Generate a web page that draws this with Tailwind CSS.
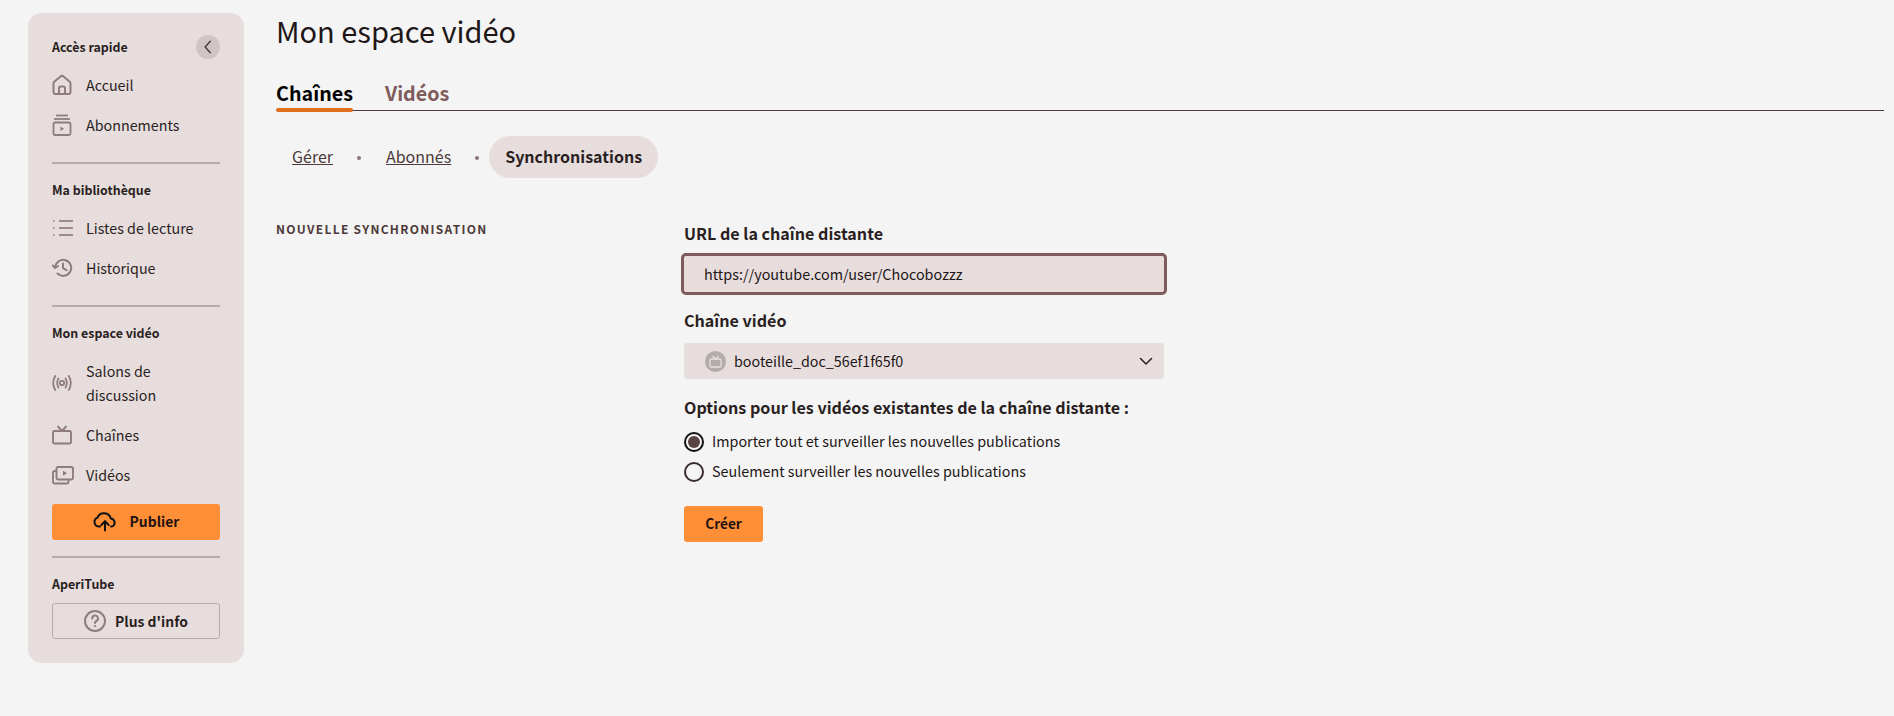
<!DOCTYPE html>
<html lang="fr">
<head>
    <meta charset="UTF-8">
    <meta name="viewport" content="width=device-width, initial-scale=1.0">
    <title>Mon espace vidéo</title>
    <script src="https://cdn.jsdelivr.net/npm/@tailwindcss/browser@4"></script>
</head>
<body class="bg-[#f4f4f4] text-[#2a1f1f] font-['Noto_Sans_CJK_SC','Noto_Sans',sans-serif] h-[716px] overflow-hidden">
    <div class="flex items-start">
        <!-- Menu latéral -->
        <aside class="ml-[28px] mt-[13px] w-[216px] h-[650px] shrink-0 rounded-[14px] bg-[#e7dddd] px-[24px] pt-[21px] text-[#2a1f1f]">
            <div class="flex items-center justify-between h-[26px]">
                <h3 class="text-[12.4px] font-bold leading-[26px]">Accès rapide</h3>
                <button class="w-[24px] h-[24px] rounded-full bg-[#d0c5c5] flex items-center justify-center">
                    <svg width="16" height="16" viewBox="0 0 14 14" fill="none" stroke="#4a3a3a" stroke-width="1.3" stroke-linecap="round" stroke-linejoin="round"><path d="M9 2 L4.5 7 L9 12"/></svg>
                </button>
            </div>
            <a class="flex items-center h-[40px] mt-[5px] text-[14.3px] leading-[24px]">
                <svg class="w-[20px] h-[22px] mr-[14px] shrink-0" viewBox="0 0 20 22" fill="none" stroke="#8f7d7d" stroke-width="2" stroke-linejoin="round"><path d="M1.5 9.5 Q1.5 8.5 2.5 7.6 L8.5 2.5 Q10 1.3 11.5 2.5 L17.5 7.6 Q18.5 8.5 18.5 9.5 V18 Q18.5 20 16.5 20 H3.5 Q1.5 20 1.5 18 Z"/><path d="M7 20 V14 Q7 12.5 8.5 12.5 H11.5 Q13 12.5 13 14 V20"/></svg>
                Accueil
            </a>
            <a class="flex items-center h-[40px] text-[14.3px] leading-[24px]">
                <svg class="w-[20px] h-[22px] mr-[14px] shrink-0" viewBox="0 0 20 22" fill="none" stroke="#8f7d7d" stroke-width="1.8"><path d="M4 1.5 H16"/><path d="M2 5 H18"/><rect x="1.5" y="8.5" width="17" height="12.5" rx="1.5"/><path d="M8.5 12.5 L12 14.7 L8.5 17 Z" fill="#8f7d7d" stroke="none"/></svg>
                Abonnements
            </a>
            <div class="h-[2px] bg-[#b8abab] mt-[17px]"></div>

            <h3 class="text-[12.4px] font-bold leading-[20px] mt-[16px]">Ma bibliothèque</h3>
            <a class="flex items-center h-[40px] mt-[8px] text-[14.3px] leading-[24px]">
                <svg class="w-[21px] h-[18px] mr-[13px] shrink-0" viewBox="0 0 21 18" fill="none" stroke="#8f7d7d" stroke-width="1.7"><path d="M7 2 H21"/><path d="M7 9 H21"/><path d="M7 16 H21"/><path d="M1 2 H2.5"/><path d="M1 9 H2.5"/><path d="M1 16 H2.5"/></svg>
                Listes de lecture
            </a>
            <a class="flex items-center h-[40px] text-[14.3px] leading-[24px]">
                <svg class="w-[21px] h-[20px] mr-[13px] shrink-0" viewBox="0 0 21 20" fill="none" stroke="#8f7d7d" stroke-width="2" stroke-linecap="round" stroke-linejoin="round"><path d="M3.2 9.5 A8 8 0 1 1 5.5 15.5"/><path d="M0.8 7.5 L3.2 10 L6 8"/><path d="M11 5.5 V10.2 L14.5 12.2"/></svg>
                Historique
            </a>
            <div class="h-[2px] bg-[#b8abab] mt-[17px]"></div>

            <h3 class="text-[12.4px] font-bold leading-[20px] mt-[16px]">Mon espace vidéo</h3>
            <a class="flex items-center h-[64px] mt-[8px] text-[14.3px] leading-[24px]">
                <svg class="w-[20px] h-[20px] mr-[14px] shrink-0" viewBox="0 0 20 20" fill="none" stroke="#8f7d7d" stroke-width="1.8" stroke-linecap="round"><circle cx="10" cy="10" r="2.2"/><path d="M6.5 5.5 Q3.8 10 6.5 14.5"/><path d="M13.5 5.5 Q16.2 10 13.5 14.5"/><path d="M3.2 3 Q-0.8 10 3.2 17"/><path d="M16.8 3 Q20.8 10 16.8 17"/></svg>
                <span class="w-[100px]">Salons de discussion</span>
            </a>
            <a class="flex items-center h-[40px] text-[14.3px] leading-[24px]">
                <svg class="w-[20px] h-[20px] mr-[14px] shrink-0" viewBox="0 0 20 20" fill="none" stroke="#8f7d7d" stroke-width="1.9" stroke-linejoin="round"><rect x="1" y="6" width="18" height="12.5" rx="1.5"/><path d="M5.5 1 L10 6 L14.5 1"/></svg>
                Chaînes
            </a>
            <a class="flex items-center h-[40px] text-[14.3px] leading-[24px]">
                <svg class="w-[22px] h-[19px] mr-[12px] shrink-0" viewBox="0 0 22 19" fill="none" stroke="#8f7d7d" stroke-width="1.9" stroke-linejoin="round"><rect x="4.5" y="1" width="16.5" height="12.5" rx="1.5"/><path d="M4.5 5 H2.5 Q1 5 1 6.5 V16 Q1 17.5 2.5 17.5 H15 Q16.5 17.5 16.5 16 V13.5"/><path d="M11 4.8 L15 7.2 L11 9.7 Z" fill="#8f7d7d" stroke="none"/></svg>
                Vidéos
            </a>
            <button class="mt-[9px] w-[168px] h-[36px] pb-[2px] rounded-[3px] bg-[#ff8f37] flex items-center justify-center text-[13.9px] font-semibold leading-[20px] text-[#1f1212]">
                <svg class="w-[24px] h-[20px] mr-[13px] translate-y-[1px]" viewBox="0 0 24 20" fill="none" stroke="#111" stroke-width="2" stroke-linecap="round" stroke-linejoin="round"><path d="M7 14.5 H5.8 A4.6 4.6 0 0 1 4.5 5.6 A7 7 0 0 1 17.8 6.5 A4.2 4.2 0 0 1 20 14 Q19.3 14.5 18 14.5"/><path d="M12 18.5 V9.5"/><path d="M8.3 13 L12 9.3 L15.7 13"/></svg>
                Publier
            </button>
            <div class="h-[2px] bg-[#b8abab] mt-[16px]"></div>

            <h3 class="text-[12.4px] font-bold leading-[20px] mt-[16px]">AperiTube</h3>
            <button class="mt-[9px] w-[168px] h-[36px] rounded-[3px] border border-[#b8abab] flex items-center justify-center text-[13.9px] font-semibold leading-[20px]">
                <svg class="w-[22px] h-[22px] mr-[9px]" viewBox="0 0 22 22" fill="none" stroke="#8f7d7d" stroke-width="2" stroke-linecap="round"><circle cx="11" cy="11" r="10"/><path d="M8.2 8.5 A2.9 2.9 0 1 1 12.4 11 Q11 11.7 11 13"/><path d="M11 16 V16.1" stroke-width="2.2"/></svg>
                Plus d'info
            </button>
        </aside>

        <!-- Contenu -->
        <main class="ml-[32px] w-[1608px]">
            <h1 class="text-[29px] font-normal leading-[38px] mt-[11px] text-[#1e1616]">Mon espace vidéo</h1>

            <div class="flex border-b border-[#4d3a3a] mt-[32px] h-[30px]">
                <a class="relative text-[19.7px] font-semibold leading-[24px] text-black">Chaînes<span class="absolute left-0 right-0 top-[27px] h-[4px] rounded-[2px] bg-[#e0701d]"></span></a>
                <a class="ml-[32px] text-[19.7px] font-semibold leading-[24px] text-[#7f5b5b]">Vidéos</a>
            </div>

            <div class="flex items-center mt-[25px] h-[42px] text-[16px] leading-[22px] text-[#4d3a3a]">
                <a class="ml-[16px] pb-[2px] underline">Gérer</a>
                <span class="ml-[24px] mt-[2px] w-[4px] h-[4px] rounded-full bg-[#8b7575]"></span>
                <a class="ml-[25px] pb-[2px] underline">Abonnés</a>
                <span class="ml-[24px] mt-[2px] w-[4px] h-[4px] rounded-full bg-[#8b7575]"></span>
                <a class="ml-[10px] h-[42px] flex items-center px-[16px] pb-[2px] rounded-full bg-[#e7dddd] font-semibold text-[#2a1f1f]">Synchronisations</a>
            </div>

            <div class="flex mt-[33px] items-start">
                <h2 class="w-[408px] shrink-0 mt-[9px] text-[12px] font-bold tracking-[1.3px] uppercase leading-[18px] text-[#4d3a3a]">Nouvelle synchronisation</h2>

                <form class="w-[480px] mt-[7px]">
                    <label class="block text-[16.1px] font-semibold leading-[22px] mt-[4px]">URL de la chaîne distante</label>
                    <input class="block -ml-[3px] w-[486px] h-[42px] mt-[9px] pb-[2px] rounded-[5px] border-[3px] border-[#7f5b5b] bg-[#e7dddd] pl-[20px] text-[14.4px] text-[#1e1616] outline-none" value="https://youtube.com/user/Chocobozzz">

                    <label class="block text-[16.1px] font-semibold leading-[22px] mt-[14px]">Chaîne vidéo</label>
                    <div class="flex items-center w-[480px] h-[36px] mt-[12px] rounded-[3px] bg-[#e7dddd] pl-[21px] pr-[11px]">
                        <span class="w-[21px] h-[21px] rounded-full bg-[#b3acac] flex items-center justify-center shrink-0">
                            <svg width="13" height="13" viewBox="0 0 13 13" fill="none" stroke="#e7dddd" stroke-width="1.3"><rect x="1" y="4" width="11" height="8" rx="1"/><path d="M3.5 1 L6.5 4 L9.5 1"/></svg>
                        </span>
                        <span class="ml-[8px] flex-1 text-[14.3px] leading-[20px] text-[#1e1616]">booteille_doc_56ef1f65f0</span>
                        <svg width="14" height="14" viewBox="0 0 14 14" fill="none" stroke="#2a1f1f" stroke-width="1.5" stroke-linecap="round" stroke-linejoin="round"><path d="M1.5 4.5 L7 10 L12.5 4.5"/></svg>
                    </div>

                    <p class="text-[16.1px] font-semibold leading-[22px] mt-[17px]">Options pour les vidéos existantes de la chaîne distante :</p>

                    <div class="flex items-center h-[30px] mt-[9px] text-[14.35px] leading-[20px] text-[#1e1616]">
                        <span class="w-[20px] h-[20px] rounded-full border-[2px] border-[#111] flex items-center justify-center shrink-0">
                            <span class="w-[12px] h-[12px] rounded-full bg-[#5a4343]"></span>
                        </span>
                        <span class="ml-[8px] pb-[2px]">Importer tout et surveiller les nouvelles publications</span>
                    </div>
                    <div class="flex items-center h-[30px] text-[14.35px] leading-[20px] text-[#1e1616]">
                        <span class="w-[20px] h-[20px] rounded-full border-[2px] border-[#3a2c2c] shrink-0"></span>
                        <span class="ml-[8px] pb-[2px]">Seulement surveiller les nouvelles publications</span>
                    </div>

                    <button type="button" class="mt-[19px] w-[79px] h-[36px] pb-[2px] rounded-[3px] bg-[#ff8f37] text-[13.7px] font-semibold leading-[20px] text-[#1f1212]">Créer</button>
                </form>
            </div>
        </main>
    </div>
</body>
</html>
